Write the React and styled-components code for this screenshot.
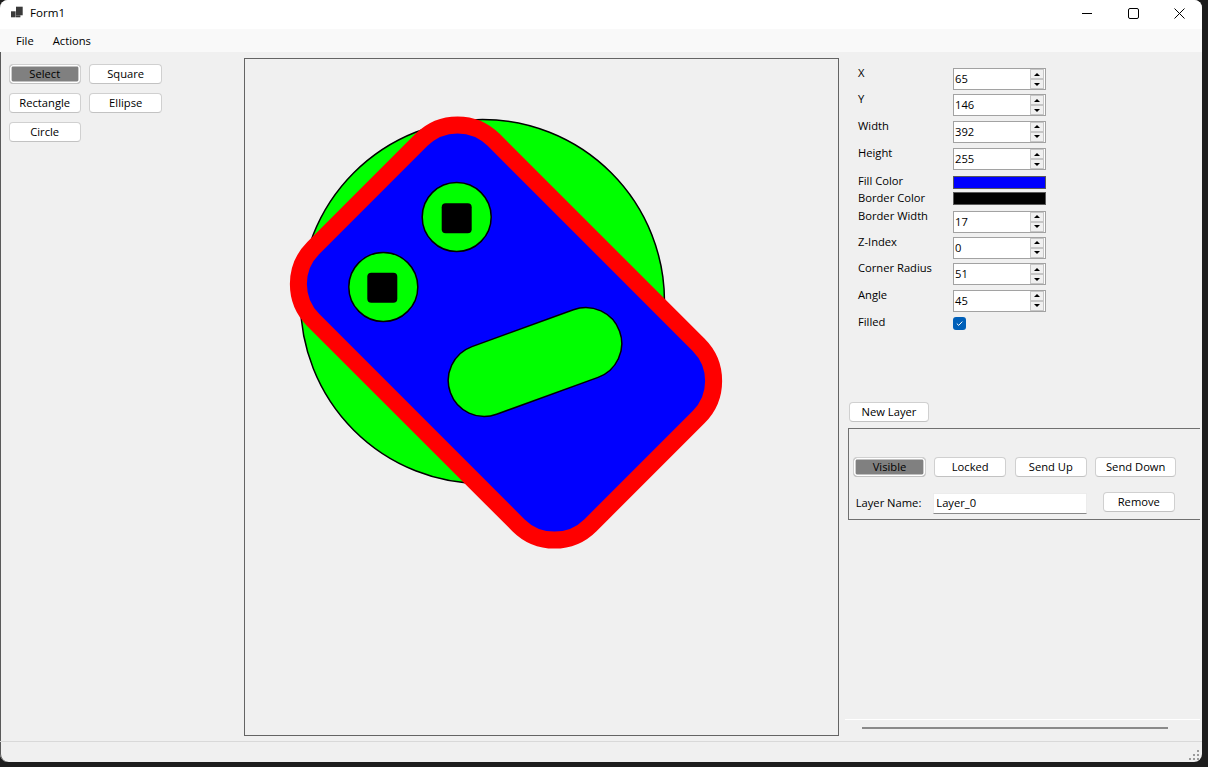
import React from 'react'
import styled, { createGlobalStyle } from 'styled-components'

const GlobalStyle = createGlobalStyle`
  html, body {
    margin: 0;
    padding: 0;
    background: #1d1d1d;
    overflow: hidden;
  }
  body {
    font-family: "Segoe UI", "Open Sans", sans-serif;
    font-size: 11.2px;
    color: #000;
  }
  * { box-sizing: border-box; }
`

const Window = styled.div`
  width: 1202px;
  height: 762px;
  display: flex;
  flex-direction: column;
  background: #f0f0f0;
  border-radius: 8px;
  overflow: hidden;
  box-shadow: inset 1px 0 0 #5a5a5a;
`

const TitleBar = styled.div`
  height: 29px;
  background: #ffffff;
  display: flex;
  align-items: center;
  flex-shrink: 0;
`

const TitleText = styled.span`
  margin-left: 7px;
  font-size: 11.6px;
  line-height: 16px;
  margin-top: -3px;
`

const WindowControls = styled.div`
  margin-left: auto;
  display: flex;
  height: 100%;
`

const ControlButton = styled.div`
  width: 46px;
  height: 100%;
  display: flex;
  align-items: center;
  justify-content: center;
  padding-bottom: 3px;
`

const MenuBar = styled.div`
  height: 23px;
  background: #f9f9f9;
  display: flex;
  align-items: center;
  gap: 19px;
  padding-left: 16px;
  flex-shrink: 0;
`

const MenuItem = styled.span`
  line-height: 16px;
  margin-top: 1px;
`

const Main = styled.div`
  flex: 1;
  display: flex;
`

const LeftPanel = styled.div`
  width: 244px;
  flex-shrink: 0;
  padding: 11.5px 0 0 8.5px;
`

const ToolGrid = styled.div`
  display: grid;
  grid-template-columns: 72.4px 72.4px;
  grid-auto-rows: 20px;
  column-gap: 8.6px;
  row-gap: 9px;
`

const Button = styled.button`
  width: ${({ $w }) => $w || 72.4}px;
  height: 20px;
  padding: 0;
  border: 1px solid #d0d0d0;
  border-bottom-color: #c2c2c2;
  border-radius: 4px;
  background: ${({ $active }) => ($active ? '#808080' : '#ffffff')};
  box-shadow: ${({ $active }) => ($active ? 'inset 0 0 0 1.6px #ffffff' : 'none')};
  font-family: inherit;
  font-size: 11.2px;
  line-height: 16px;
  color: #000;
  text-align: center;
  flex-shrink: 0;
`

const Canvas = styled.div`
  width: 595px;
  height: 678px;
  margin-top: 6px;
  border: 1px solid #646464;
  flex-shrink: 0;
  overflow: hidden;
`

const RightPanel = styled.div`
  flex: 1;
  display: flex;
  flex-direction: column;
`

const PropList = styled.div`
  margin: 16px 0 0 19px;
  display: flex;
  flex-direction: column;
`

const PropRow = styled.div`
  height: ${({ $h }) => $h}px;
  display: flex;
  align-items: flex-start;
  flex-shrink: 0;
`

const PropLabel = styled.span`
  width: 95px;
  line-height: 16px;
  margin-top: ${({ $swatch }) => ($swatch ? -2.5 : -3)}px;
  flex-shrink: 0;
`

const SpinBox = styled.div`
  width: 93px;
  height: 22px;
  background: #ffffff;
  border: 1px solid #a2a2a2;
  display: flex;
  align-items: center;
`

const SpinValue = styled.span`
  flex: 1;
  padding-left: 1px;
  line-height: 16px;
`

const SpinArrows = styled.div`
  width: 14px;
  height: 20px;
  margin-right: 1px;
  display: flex;
  flex-direction: column;
`

const SpinArrow = styled.div`
  flex: 1;
  background: #f0f0f0;
  border: 1px solid #c6c6c6;
  display: flex;
  align-items: center;
  justify-content: center;
  &:after {
    content: '';
    border-left: 3px solid transparent;
    border-right: 3px solid transparent;
    ${({ $down }) => ($down ? 'border-top: 3px solid #000;' : 'border-bottom: 3px solid #000;')}
  }
`

const Swatch = styled.div`
  width: 93px;
  height: 13px;
  border: 1px solid #5a5a5a;
  background: ${({ $color }) => $color};
`

const CheckBox = styled.div`
  width: 13px;
  height: 13px;
  border-radius: 3px;
  background: #005fb8;
  display: flex;
  align-items: center;
  justify-content: center;
`

const NewLayerRow = styled.div`
  margin: 72px 0 0 10px;
`

const GroupBox = styled.div`
  margin: 6px 0 0 9px;
  width: 352px;
  height: 92px;
  border: 1px solid #707070;
  border-right: none;
  padding: 28px 0 0 4.3px;
`

const ButtonRow = styled.div`
  display: flex;
  gap: 8.3px;
`

const NameRow = styled.div`
  display: flex;
  align-items: flex-start;
  margin-top: 15px;
`

const NameLabel = styled.span`
  width: 80px;
  padding-left: 2.4px;
  margin-top: 2.4px;
  line-height: 16px;
  flex-shrink: 0;
`

const TextBox = styled.div`
  width: 154px;
  height: 21px;
  margin-top: 1px;
  background: #ffffff;
  border: 1px solid #ececec;
  border-bottom-color: #8a8a8a;
  padding-left: 2px;
  line-height: 18px;
`

const RemoveWrap = styled.div`
  margin-left: 15.3px;
`

const BottomArea = styled.div`
  margin-top: auto;
  display: flex;
  flex-direction: column;
  padding-bottom: 12px;
`

const WhiteLine = styled.div`
  margin-left: 6px;
  width: 355px;
  height: 1px;
  background: #ffffff;
`

const TrackBar = styled.div`
  margin: 7px 0 0 23px;
  width: 306px;
  height: 2px;
  background: #8a8a8a;
`

const StatusBar = styled.div`
  height: 21px;
  border-top: 1px solid #d9d9d9;
  flex-shrink: 0;
  display: flex;
  justify-content: flex-end;
  align-items: flex-end;
  padding: 0 2px 1px 0;
`

const props = [
  { label: 'X', value: '65', h: 26.3 },
  { label: 'Y', value: '146', h: 26.7 },
  { label: 'Width', value: '392', h: 27.3 },
  { label: 'Height', value: '255', h: 27.4 },
  { label: 'Fill Color', color: '#0000ff', h: 16.8 },
  { label: 'Border Color', color: '#000000', h: 18.2 },
  { label: 'Border Width', value: '17', h: 26 },
  { label: 'Z-Index', value: '0', h: 26.6 },
  { label: 'Corner Radius', value: '51', h: 26.7 },
  { label: 'Angle', value: '45', h: 27.3 },
  { label: 'Filled', check: true, h: 13 },
]

const AppIcon = () => (
  <svg width="23" height="29">
    <rect x="16" y="6.7" width="6.7" height="8.6" fill="#3a3a3a" />
    <rect x="16" y="15.3" width="4.4" height="2" fill="#3a3a3a" />
    <rect x="11" y="11.3" width="4.6" height="6" fill="#3a3a3a" />
  </svg>
)

const Shapes = () => (
  <svg width="593" height="676">
    <circle cx="237.5" cy="242.5" r="182" fill="#00ff00" stroke="#000" strokeWidth="1.5" />
    <rect
      x="65" y="146" width="392" height="255" rx="51"
      fill="#0000ff" stroke="#ff0000" strokeWidth="17"
      transform="rotate(45 261 273.5)"
    />
    <circle cx="211.7" cy="158" r="34.5" fill="#00ff00" stroke="#000" strokeWidth="1.5" />
    <rect x="196.7" y="144.3" width="30" height="30" rx="4" fill="#000" />
    <circle cx="138.3" cy="228" r="34.5" fill="#00ff00" stroke="#000" strokeWidth="1.5" />
    <rect x="122.3" y="213.7" width="30" height="30" rx="4" fill="#000" />
    <rect
      x="200" y="267" width="180" height="72" rx="36"
      fill="#00ff00" stroke="#000" strokeWidth="1.5"
      transform="rotate(-20 290 303)"
    />
  </svg>
)

export default function App() {
  return (
    <>
      <GlobalStyle />
      <Window>
        <TitleBar>
          <AppIcon />
          <TitleText>Form1</TitleText>
          <WindowControls>
            <ControlButton>
              <svg width="10" height="10"><line x1="0" y1="5.5" x2="10" y2="5.5" stroke="#000" strokeWidth="1" /></svg>
            </ControlButton>
            <ControlButton>
              <svg width="11" height="11"><rect x="0.5" y="0.5" width="10" height="10" rx="1.5" fill="none" stroke="#000" strokeWidth="1" /></svg>
            </ControlButton>
            <ControlButton>
              <svg width="11" height="11"><path d="M0.5 0.5 L10.5 10.5 M10.5 0.5 L0.5 10.5" stroke="#000" strokeWidth="1" /></svg>
            </ControlButton>
          </WindowControls>
        </TitleBar>
        <MenuBar>
          <MenuItem>File</MenuItem>
          <MenuItem>Actions</MenuItem>
        </MenuBar>
        <Main>
          <LeftPanel>
            <ToolGrid>
              <Button $active>Select</Button>
              <Button>Square</Button>
              <Button>Rectangle</Button>
              <Button>Ellipse</Button>
              <Button>Circle</Button>
            </ToolGrid>
          </LeftPanel>
          <Canvas>
            <Shapes />
          </Canvas>
          <RightPanel>
            <PropList>
              {props.map((p) => (
                <PropRow key={p.label} $h={p.h}>
                  <PropLabel $swatch={!!p.color}>{p.label}</PropLabel>
                  {p.value !== undefined && (
                    <SpinBox>
                      <SpinValue>{p.value}</SpinValue>
                      <SpinArrows>
                        <SpinArrow />
                        <SpinArrow $down />
                      </SpinArrows>
                    </SpinBox>
                  )}
                  {p.color && <Swatch $color={p.color} />}
                  {p.check && (
                    <CheckBox>
                      <svg width="9" height="9" viewBox="0 0 9 9">
                        <path d="M1.8 4.6 L3.7 6.4 L7.3 2.6" fill="none" stroke="#fff" strokeWidth="1" />
                      </svg>
                    </CheckBox>
                  )}
                </PropRow>
              ))}
            </PropList>
            <NewLayerRow>
              <Button $w={80}>New Layer</Button>
            </NewLayerRow>
            <GroupBox>
              <ButtonRow>
                <Button $active>Visible</Button>
                <Button>Locked</Button>
                <Button>Send Up</Button>
                <Button $w={80.7}>Send Down</Button>
              </ButtonRow>
              <NameRow>
                <NameLabel>Layer Name:</NameLabel>
                <TextBox>Layer_0</TextBox>
                <RemoveWrap>
                  <Button>Remove</Button>
                </RemoveWrap>
              </NameRow>
            </GroupBox>
            <BottomArea>
              <WhiteLine />
              <TrackBar />
            </BottomArea>
          </RightPanel>
        </Main>
        <StatusBar>
          <svg width="12" height="12">
            <rect x="9" y="1" width="2" height="2" fill="#9a9a9a" />
            <rect x="5" y="5" width="2" height="2" fill="#9a9a9a" />
            <rect x="9" y="5" width="2" height="2" fill="#9a9a9a" />
            <rect x="1" y="9" width="2" height="2" fill="#9a9a9a" />
            <rect x="5" y="9" width="2" height="2" fill="#9a9a9a" />
            <rect x="9" y="9" width="2" height="2" fill="#9a9a9a" />
          </svg>
        </StatusBar>
      </Window>
    </>
  )
}
